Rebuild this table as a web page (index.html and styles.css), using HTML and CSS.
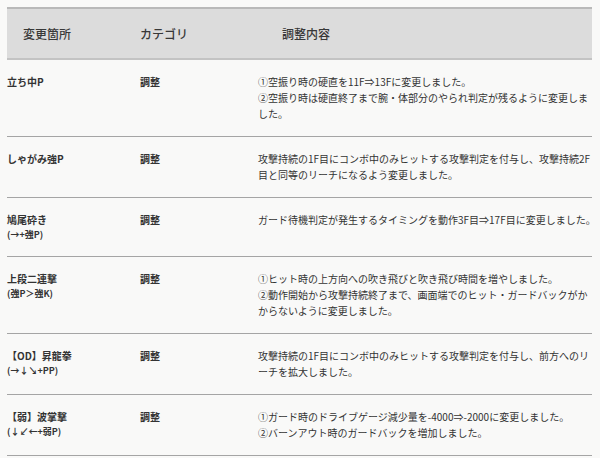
FILE: index.html
```html
<!DOCTYPE html>
<html lang="ja">
<head>
<meta charset="utf-8">
<link rel="stylesheet" href="styles.css">
</head>
<body>
<div class="table">
  <div class="head">
    <div class="h h1">変更箇所</div>
    <div class="h h2">カテゴリ</div>
    <div class="h h3">調整内容</div>
  </div>
  <div class="row">
    <div class="name">立ち中P</div>
    <div class="cat">調整</div>
    <div class="desc">①空振り時の硬直を11F⇒13Fに変更しました。<br>②空振り時は硬直終了まで腕・体部分のやられ判定が残るように変更しま<br>した。</div>
  </div>
  <div class="row">
    <div class="name">しゃがみ強P</div>
    <div class="cat">調整</div>
    <div class="desc">攻撃持続の1F目にコンボ中のみヒットする攻撃判定を付与し、攻撃持続2F<br>目と同等のリーチになるよう変更しました。</div>
  </div>
  <div class="row">
    <div class="name">鳩尾砕き<span class="cmd">(→+強P)</span></div>
    <div class="cat">調整</div>
    <div class="desc">ガード待機判定が発生するタイミングを動作3F目⇒17F目に変更しました。</div>
  </div>
  <div class="row">
    <div class="name">上段二連撃<span class="cmd">(強P＞強K)</span></div>
    <div class="cat">調整</div>
    <div class="desc">①ヒット時の上方向への吹き飛びと吹き飛び時間を増やしました。<br>②動作開始から攻撃持続終了まで、画面端でのヒット・ガードバックがか<br>からないように変更しました。</div>
  </div>
  <div class="row">
    <div class="name">【OD】昇龍拳<span class="cmd">(→↓↘+PP)</span></div>
    <div class="cat">調整</div>
    <div class="desc">攻撃持続の1F目にコンボ中のみヒットする攻撃判定を付与し、前方へのリ<br>ーチを拡大しました。</div>
  </div>
  <div class="row">
    <div class="name">【弱】波掌撃<span class="cmd">(↓↙←+弱P)</span></div>
    <div class="cat">調整</div>
    <div class="desc">①ガード時のドライブゲージ減少量を-4000⇒-2000に変更しました。<br>②バーンアウト時のガードバックを増加しました。</div>
  </div>
</div>
</body>
</html>
```
FILE: styles.css
```css
html, body {
  margin: 0;
  padding: 0;
  background: #f9f9f8;
}
body {
  font-family: "Noto Sans CJK JP", "Noto Sans", sans-serif;
  color: #333333;
}
.table {
  margin: 7px 8px 0 7px;
  width: 585px;
}
.head {
  display: grid;
  grid-template-columns: 133px 118px 1fr;
  align-items: center;
  height: 49px;
  background: #dcdcdc;
  border-top: 2px solid #b9b9b9;
  border-bottom: 2px solid #c3c3c3;
}
.h {
  font-size: 12px;
  font-weight: 500;
  color: #383838;
}
.h1 { padding-left: 16px; }
.h3 { padding-left: 24px; }
.row {
  display: grid;
  grid-template-columns: 133px 118px 1fr;
  padding: 14px 0 14px;
  border-bottom: 1px solid #a5a5a5;
}
.name {
  font-size: 10px;
  font-weight: bold;
  line-height: 16px;
  display: flex;
  flex-direction: column;
}
.cmd {
  font-size: 9px;
  line-height: 14px;
}
.cat {
  font-size: 10px;
  font-weight: bold;
  line-height: 16px;
}
.desc {
  font-size: 10px;
  line-height: 16px;
  white-space: nowrap;
}
```
